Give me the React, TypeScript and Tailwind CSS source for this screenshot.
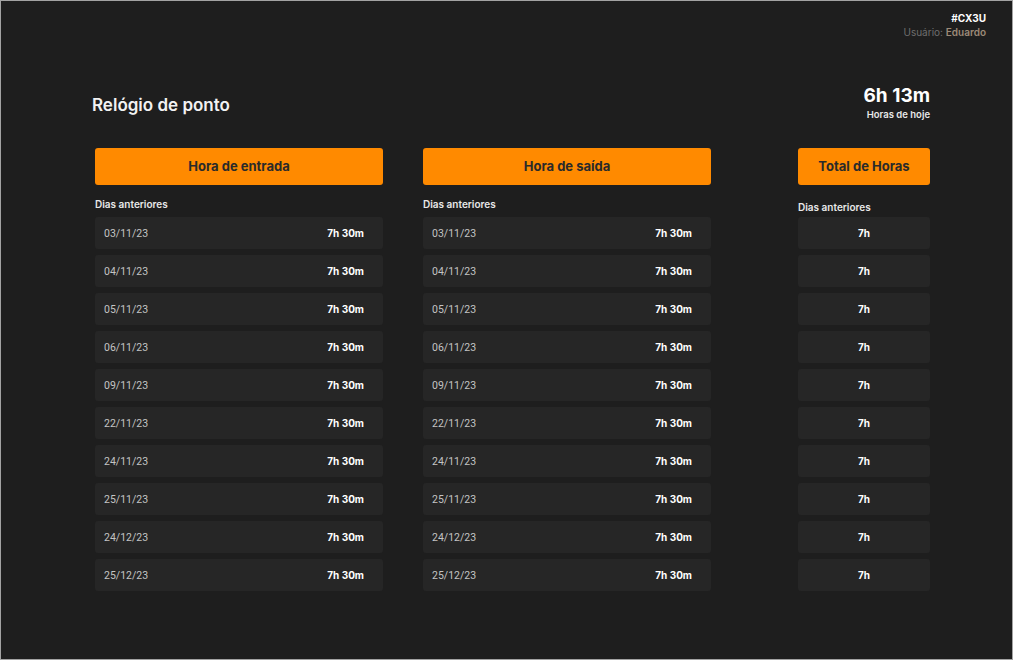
const days = [
  '03/11/23',
  '04/11/23',
  '05/11/23',
  '06/11/23',
  '09/11/23',
  '22/11/23',
  '24/11/23',
  '25/11/23',
  '24/12/23',
  '25/12/23',
];

const heading = { fontFamily: 'Inter, "Noto Sans", sans-serif' };
const body = { fontFamily: 'Roboto, "Noto Sans", sans-serif' };

function HourColumn({ title }: { title: string }) {
  return (
    <div className="w-[288px] flex flex-col">
      <div
        className="h-[37px] rounded-[3px] bg-[#ff8a00] flex items-center justify-center text-[13px] font-bold text-[#2a2a2a]"
        style={heading}
      >
        {title}
      </div>
      <p className="mt-[12px] h-[20px] text-[10px] font-semibold text-[#e8e8e8]" style={heading}>
        Dias anteriores
      </p>
      <ul className="flex flex-col gap-[6px]">
        {days.map((d, i) => (
          <li
            key={i}
            className="h-[32px] rounded-[3px] bg-[#262626] flex items-center justify-between pl-[9px] pr-[19px]"
          >
            <span className="mt-[2px] text-[10.5px] text-[#c4c4c4]" style={body}>
              {d}
            </span>
            <span className="text-[10px] font-bold text-white" style={heading}>
              7h 30m
            </span>
          </li>
        ))}
      </ul>
    </div>
  );
}

export default function App() {
  return (
    <div className="w-[1013px] h-[660px] bg-[#1e1e1e] border border-[#a3a3a3] flex flex-col">
      <div className="flex justify-end pt-[10px] pr-[26px]">
        <div className="text-right leading-[14px]" style={heading}>
          <p className="text-[10px] font-bold text-white">#CX3U</p>
          <p className="text-[10px] text-[#6e6e6e]">
            Usuário: <span className="font-semibold text-[#9c8a78]">Eduardo</span>
          </p>
        </div>
      </div>

      <div className="flex justify-between items-start pl-[91px] pr-[82px] mt-[45px]">
        <h1 className="mt-[9px] text-[17px] font-semibold text-[#f2f2f2]" style={heading}>
          Relógio de ponto
        </h1>
        <div className="text-right" style={heading}>
          <p className="text-[19px] font-bold text-white leading-[24px]">6h 13m</p>
          <p className="text-[9.5px] font-semibold text-[#e8e8e8] leading-[14px]">Horas de hoje</p>
        </div>
      </div>

      <div className="flex pl-[94px] mt-[26px]">
        <HourColumn title="Hora de entrada" />
        <div className="ml-[40px]">
          <HourColumn title="Hora de saída" />
        </div>
        <div className="ml-[87px] w-[132px] flex flex-col">
          <div
            className="h-[37px] rounded-[3px] bg-[#ff8a00] flex items-center justify-center text-[13px] font-bold text-[#2a2a2a]"
            style={heading}
          >
            Total de Horas
          </div>
          <p className="mt-[15px] h-[17px] text-[10px] font-semibold text-[#e8e8e8]" style={heading}>
            Dias anteriores
          </p>
          <ul className="flex flex-col gap-[6px]">
            {days.map((d) => (
              <li
                key={d}
                className="h-[32px] rounded-[3px] bg-[#262626] flex items-center justify-center text-[10px] font-bold text-white"
                style={heading}
              >
                7h
              </li>
            ))}
          </ul>
        </div>
      </div>
    </div>
  );
}
